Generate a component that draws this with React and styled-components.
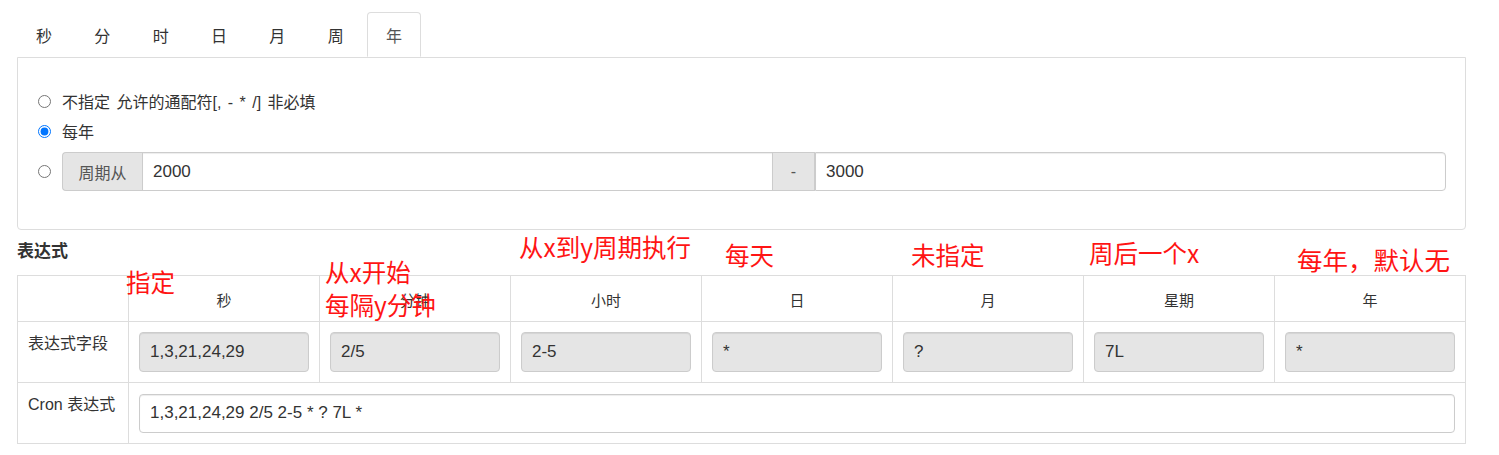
import React, { useState } from "react";
import styled, { createGlobalStyle } from "styled-components";

const GlobalStyle = createGlobalStyle`
  html, body {
    margin: 0;
    padding: 0;
    background: #fff;
  }
  body {
    font-family: "Liberation Sans", "Noto Sans CJK SC", sans-serif;
    font-size: 16px;
    color: #333;
  }
`;

const Page = styled.div`
  position: relative;
  width: 1449px;
  padding: 12px 0 0 17px;
`;

const TabBar = styled.div`
  display: flex;
  gap: 4.33px;
  height: 45px;
`;

const Tab = styled.div`
  width: 54px;
  height: 45px;
  box-sizing: border-box;
  display: flex;
  align-items: center;
  justify-content: center;
  font-size: 16px;
  color: ${({ active }) => (active ? "#555" : "#333")};
  background: #fff;
  border: 1px solid ${({ active }) => (active ? "#ddd" : "transparent")};
  border-bottom-color: ${({ active }) => (active ? "#fff" : "transparent")};
  border-radius: 4px 4px 0 0;
  position: relative;
  z-index: 1;
  margin-bottom: -1px;
  cursor: pointer;
`;

const Panel = styled.div`
  border: 1px solid #ddd;
  border-radius: 0 0 4px 4px;
  height: 173px;
  box-sizing: border-box;
  padding: 28px 19px 0 19px;
`;

const RadioRow = styled.label`
  display: flex;
  align-items: center;
  gap: 11px;
  margin-top: ${({ spaced }) => (spaced ? "6px" : "0")};
  height: ${({ spaced }) => (spaced ? "39px" : "30px")};
  font-size: 16px;
  word-spacing: 2px;
`;

const Radio = styled.input`
  width: 13px;
  height: 13px;
  margin: 0 0 0 1px;
  flex: none;
`;

const InputGroup = styled.div`
  display: flex;
  flex: 1;
  height: 39px;
  word-spacing: normal;
`;

const Addon = styled.span`
  display: flex;
  align-items: center;
  justify-content: center;
  width: ${({ w }) => w}px;
  flex: none;
  box-sizing: border-box;
  background: #e5e5e5;
  border: 1px solid #ccc;
  border-right: ${({ first }) => (first ? "0" : "1px solid #ccc")};
  border-left: ${({ first }) => (first ? "1px solid #ccc" : "0")};
  border-radius: ${({ first }) => (first ? "4px 0 0 4px" : "0")};
  color: #555;
  font-size: 16px;
`;

const GroupInput = styled.input`
  flex: 1;
  min-width: 0;
  box-sizing: border-box;
  height: 39px;
  border: 1px solid #ccc;
  border-radius: ${({ last }) => (last ? "0 4px 4px 0" : "0")};
  box-shadow: inset 0 1px 1px rgba(0, 0, 0, 0.075);
  padding: 0 10px;
  font-family: "Liberation Sans", sans-serif;
  font-size: 17px;
  color: #333;
  outline: none;
`;

const SectionTitle = styled.div`
  font-weight: bold;
  font-size: 17px;
  line-height: 22px;
  margin: 11px 0 12px;
`;

const Table = styled.table`
  width: 1449px;
  border-collapse: collapse;
  table-layout: fixed;
`;

const Th = styled.th`
  border: 1px solid #ddd;
  height: 46px;
  box-sizing: border-box;
  font-weight: normal;
  font-size: 15px;
  text-align: center;
  vertical-align: middle;
  padding: 2px 0 0;
`;

const LabelCell = styled.td`
  border: 1px solid #ddd;
  vertical-align: top;
  padding: 12px 10px 0 10px;
  line-height: 20px;
  font-size: 16px;
  height: 61px;
  box-sizing: border-box;
`;

const Cell = styled.td`
  border: 1px solid #ddd;
  padding: 0 10px;
  height: 61px;
  box-sizing: border-box;
  vertical-align: middle;
`;

const FieldInput = styled.input`
  width: 100%;
  box-sizing: border-box;
  height: ${({ tall }) => (tall ? 39 : 40)}px;
  border: 1px solid #ccc;
  border-radius: 4px;
  background: ${({ shaded }) => (shaded ? "#e5e5e5" : "#fff")};
  box-shadow: inset 0 1px 1px rgba(0, 0, 0, 0.075);
  padding: 0 10px;
  font-family: "Liberation Sans", sans-serif;
  font-size: 17px;
  color: #333;
  outline: none;
  display: block;
`;

const Note = styled.span`
  position: absolute;
  left: ${({ x }) => x}px;
  top: ${({ y }) => y}px;
  color: #ff1414;
  font-family: "Noto Sans CJK SC", sans-serif;
  font-size: ${({ size }) => size || 24.5}px;
  line-height: 1;
  white-space: nowrap;
  pointer-events: none;
`;

const tabs = ["秒", "分", "时", "日", "月", "周", "年"];
const columns = ["秒", "分钟", "小时", "日", "月", "星期", "年"];
const values = ["1,3,21,24,29", "2/5", "2-5", "*", "?", "7L", "*"];

// red annotations drawn over the table
const notes = [
  { x: 126, y: 270, text: "指定" },
  { x: 325, y: 260, text: "从x开始" },
  { x: 325, y: 293, text: "每隔y分钟" },
  { x: 519, y: 235, text: "从x到y周期执行" },
  { x: 725, y: 243, text: "每天" },
  { x: 911, y: 243, text: "未指定" },
  { x: 1089, y: 241, text: "周后一个x" },
  { x: 1297, y: 246, text: "每年，默认无", size: 25.5 },
];

const App = () => {
  const [tab, setTab] = useState(6);
  const [mode, setMode] = useState("every");

  return (
    <>
      <GlobalStyle />
      <Page>
        <TabBar>
          {tabs.map((t, i) => (
            <Tab key={t} active={i === tab} onClick={() => setTab(i)}>
              {t}
            </Tab>
          ))}
        </TabBar>
        <Panel>
          <RadioRow>
            <Radio type="radio" name="year" checked={mode === "none"} onChange={() => setMode("none")} />
            不指定 允许的通配符[, - * /] 非必填
          </RadioRow>
          <RadioRow>
            <Radio type="radio" name="year" checked={mode === "every"} onChange={() => setMode("every")} />
            每年
          </RadioRow>
          <RadioRow spaced>
            <Radio type="radio" name="year" checked={mode === "cycle"} onChange={() => setMode("cycle")} />
            <InputGroup>
              <Addon first w={80}>周期从</Addon>
              <GroupInput defaultValue="2000" />
              <Addon w={42}>-</Addon>
              <GroupInput last defaultValue="3000" />
            </InputGroup>
          </RadioRow>
        </Panel>

        <SectionTitle>表达式</SectionTitle>
        <Table>
          <colgroup>
            <col style={{ width: 111 }} />
            {columns.map((c) => (
              <col key={c} />
            ))}
          </colgroup>
          <thead>
            <tr>
              <Th />
              {columns.map((c) => (
                <Th key={c}>{c}</Th>
              ))}
            </tr>
          </thead>
          <tbody>
            <tr>
              <LabelCell>表达式字段</LabelCell>
              {values.map((v, i) => (
                <Cell key={i}>
                  <FieldInput readOnly shaded value={v} />
                </Cell>
              ))}
            </tr>
            <tr>
              <LabelCell>Cron 表达式</LabelCell>
              <Cell colSpan={7}>
                <FieldInput tall readOnly value={values.join(" ")} />
              </Cell>
            </tr>
          </tbody>
        </Table>

        {notes.map((n) => (
          <Note key={n.text} x={n.x} y={n.y} size={n.size}>
            {n.text}
          </Note>
        ))}
      </Page>
    </>
  );
};

export default App;
